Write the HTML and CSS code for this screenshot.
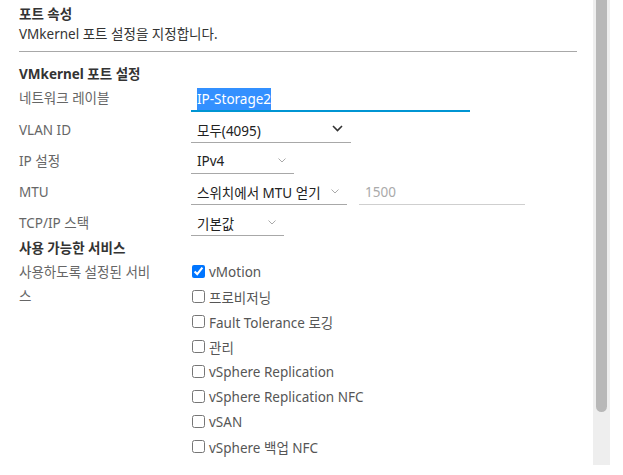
FILE: index.html
```html
<!DOCTYPE html>
<html lang="ko">
<head>
<meta charset="utf-8">
<link rel="stylesheet" href="styles.css">
</head>
<body>
<div class="page">
  <div class="content">
    <h3 class="title">포트 속성</h3>
    <p class="desc">VMkernel 포트 설정을 지정합니다.</p>
    <hr class="divider">
    <h4 class="section">VMkernel 포트 설정</h4>

    <div class="row row-input">
      <div class="label">네트워크 레이블</div>
      <div class="value">
        <div class="text-input focused"><span class="sel">IP-Storage2</span></div>
      </div>
    </div>

    <div class="row">
      <div class="label">VLAN ID</div>
      <div class="value">
        <div class="select w-vlan"><span>모두(4095)</span>
          <svg class="chev dark" width="11" height="7" viewBox="0 0 11 7"><polyline points="1,1 5.5,5.5 10,1" fill="none" stroke="#333" stroke-width="1.6"/></svg>
        </div>
      </div>
    </div>

    <div class="row">
      <div class="label">IP 설정</div>
      <div class="value">
        <div class="select w-ip"><span>IPv4</span>
          <svg class="chev" width="8" height="5" viewBox="0 0 8 5"><polyline points="0.5,0.5 4,4 7.5,0.5" fill="none" stroke="#aaa" stroke-width="1"/></svg>
        </div>
      </div>
    </div>

    <div class="row">
      <div class="label">MTU</div>
      <div class="value">
        <div class="select w-mtu"><span>스위치에서 MTU 얻기</span>
          <svg class="chev" width="8" height="5" viewBox="0 0 8 5"><polyline points="0.5,0.5 4,4 7.5,0.5" fill="none" stroke="#aaa" stroke-width="1"/></svg>
        </div>
        <div class="num-input">1500</div>
      </div>
    </div>

    <div class="row">
      <div class="label">TCP/IP 스택</div>
      <div class="value">
        <div class="select w-tcp"><span>기본값</span>
          <svg class="chev" width="8" height="5" viewBox="0 0 8 5"><polyline points="0.5,0.5 4,4 7.5,0.5" fill="none" stroke="#aaa" stroke-width="1"/></svg>
        </div>
      </div>
    </div>

    <h4 class="section services-title">사용 가능한 서비스</h4>

    <div class="services">
      <div class="label svc-label">사용하도록 설정된 서비스</div>
      <div class="checks">
        <label class="check"><input type="checkbox" checked><span>vMotion</span></label>
        <label class="check"><input type="checkbox"><span>프로비저닝</span></label>
        <label class="check"><input type="checkbox"><span>Fault Tolerance 로깅</span></label>
        <label class="check"><input type="checkbox"><span>관리</span></label>
        <label class="check"><input type="checkbox"><span>vSphere Replication</span></label>
        <label class="check"><input type="checkbox"><span>vSphere Replication NFC</span></label>
        <label class="check"><input type="checkbox"><span>vSAN</span></label>
        <label class="check"><input type="checkbox"><span>vSphere 백업 NFC</span></label>
      </div>
    </div>
  </div>
  <div class="scrollbar"><div class="thumb"></div></div>
</div>
</body>
</html>
```

FILE: styles.css
```css
* { box-sizing: border-box; }
html, body { margin: 0; padding: 0; background: #fff; }
body {
  font-family: "Noto Sans", "Noto Sans CJK KR", sans-serif;
  font-size: 13.5px;
  color: #333;
  width: 623px;
  height: 475px;
  overflow: hidden;
}
.page { display: flex; align-items: flex-start; }
.content { width: 577px; padding-left: 19px; }
.title {
  margin: 0; padding-top: 4px;
  font-size: 13.5px; font-weight: 700; line-height: 20px; color: #333;
}
.desc { margin: 0; line-height: 20px; color: #333; }
.divider { margin: 7px 0 0; border: 0; border-top: 1px solid #a8a8a8; height: 0; }
.section {
  margin: 12px 0 0; font-size: 13.5px; font-weight: 700; line-height: 20px; color: #333;
}
.row { display: flex; align-items: stretch; margin-top: 6px; height: 25px; }
.row-input { margin-top: 2px; height: 26px; }
.label { width: 172px; color: #666; line-height: 24px; }
.value { display: flex; align-items: flex-end; gap: 12px; }
.text-input {
  width: 279px; height: 26px; padding: 2px 0 0 6px;
  border-bottom: 2px solid #0095d3; line-height: 22px; color: #000;
}
.sel { display: inline-block; background: #3390ff; color: #fff; height: 22px; line-height: 22px; }
.select {
  display: flex; align-items: center; justify-content: space-between;
  height: 25px; padding: 0 8px 1px 6px;
  border-bottom: 1px solid #a8a8a8; color: #222;
}
.w-vlan { width: 160px; }
.w-ip { width: 103px; }
.w-mtu { width: 156px; }
.w-tcp { width: 93px; }
.chev { flex: none; }
.chev.dark { margin-top: -2px; }
.num-input {
  width: 166px; height: 25px; padding: 0 0 1px 6px;
  border-bottom: 1px solid #cfcfcf; color: #aaa; line-height: 24px;
}
.services-title { margin-top: 1px; line-height: 22px; }
.services { display: flex; padding-top: 0; }
.svc-label { width: 138px; margin-right: 34px; line-height: 24px; padding-top: 1px; }
.checks { display: flex; flex-direction: column; }
.check { display: flex; align-items: center; height: 25px; color: #565656; }
.check input { margin: 0 4px 0 1px; width: 13px; height: 13px; }
.scrollbar {
  margin-left: 16px; width: 17px; height: 465px; background: #eeeeee;
  display: flex; justify-content: center;
}
.thumb { width: 11px; height: 412px; background: #b8b8b8; border-radius: 0 0 6px 6px; }
```
